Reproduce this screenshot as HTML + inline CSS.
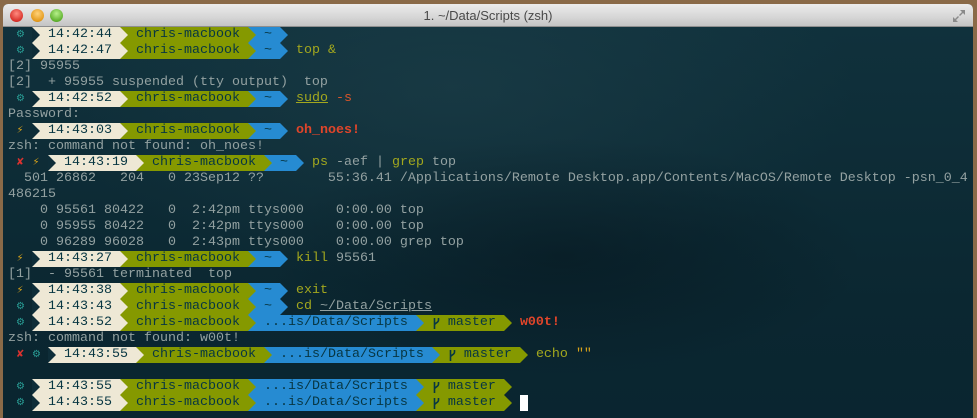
<!DOCTYPE html>
<html><head><meta charset="utf-8"><style>
*{margin:0;padding:0;box-sizing:border-box}
body{width:977px;height:418px;overflow:hidden;background:#8a6a48;position:relative;font-family:"Liberation Mono","DejaVu Sans Mono",monospace}
#win{position:absolute;left:3px;top:4px;width:970px;height:414px;border-radius:5px 5px 0 0;overflow:hidden;background:#0d2b36}
#tb{position:absolute;left:0;top:0;width:100%;height:23px;background:linear-gradient(#ececec,#d6d6d6 60%,#c4c4c4);border-bottom:1px solid #8e8e8e}
#tb .t{position:absolute;left:0;width:100%;top:4px;text-align:center;font:13px "Liberation Sans",sans-serif;color:#4a4a4a}
.dot{position:absolute;top:5px;width:13px;height:13px;border-radius:50%}
#term{position:absolute;left:0;top:23px;width:100%;height:391px;
background:radial-gradient(ellipse 300px 120px at 560px 230px,rgba(5,20,28,.5),transparent),radial-gradient(ellipse 400px 200px at 450px 60px,rgba(40,75,85,.35),transparent),linear-gradient(#10313c,#0b2731 70%,#0a2530)}
.row{position:absolute;left:5px;height:16px;line-height:16px;font-size:13.333px;white-space:pre;color:#93a1a1}
.row>span{display:inline-block;height:16px;vertical-align:top}
.i{width:8px;text-align:center;font-family:"DejaVu Sans",sans-serif;font-size:10px}
.s{width:8px;position:relative;background:var(--b)}
.s::before{content:"";position:absolute;left:0;top:0;border-top:8px solid transparent;border-bottom:8px solid transparent;border-left:8px solid var(--a)}
.be{background:#eee8d5;color:#073642}
.gr{background:#859900;color:#073642}
.bl{background:#268bd2;color:#073642}
.y{color:#a2a71e}.r{color:#e0452a;font-weight:bold}.o{color:#d8552a}
.c{color:#2aa198}.z{color:#d7a21a}.x{color:#dc322f}
.br{display:inline-block;width:8px;height:16px;vertical-align:top}
</style></head><body>
<div id="win">
<div id="tb">
<div class="dot" style="left:7px;background:radial-gradient(circle at 50% 35%,#ff8b80,#d8312a 70%,#a0201a)"></div>
<div class="dot" style="left:28px;background:radial-gradient(circle at 50% 35%,#ffd27a,#e49a1c 70%,#b07010)"></div>
<div class="dot" style="left:47px;background:radial-gradient(circle at 50% 35%,#b6f08a,#5fb12e 70%,#3d8020)"></div>
<div class="t">1. ~/Data/Scripts (zsh)</div>
<svg style="position:absolute;right:6px;top:4px" width="16" height="16" viewBox="0 0 16 16"><path d="M9 2h5v5l-2-2-3 3-1-1 3-3zM7 14H2V9l2 2 3-3 1 1-3 3z" fill="#8a8a8a"/></svg>
</div>
<div id="term">
<div class="row" style="top:0px"> <span class="i c">⚙</span> <span class="s" style="--a:#0e2d38;--b:#eee8d5"></span><span class="be"> 14:42:44 </span><span class="s" style="--a:#eee8d5;--b:#859900"></span><span class="gr"> chris-macbook </span><span class="s" style="--a:#859900;--b:#268bd2"></span><span class="bl"> ~ </span><span class="s" style="--a:#268bd2;--b:transparent"></span></div>
<div class="row" style="top:16px"> <span class="i c">⚙</span> <span class="s" style="--a:#0e2d38;--b:#eee8d5"></span><span class="be"> 14:42:47 </span><span class="s" style="--a:#eee8d5;--b:#859900"></span><span class="gr"> chris-macbook </span><span class="s" style="--a:#859900;--b:#268bd2"></span><span class="bl"> ~ </span><span class="s" style="--a:#268bd2;--b:transparent"></span> <span class="y">top &amp;</span></div>
<div class="row" style="top:32px">[2] 95955</div>
<div class="row" style="top:48px">[2]  + 95955 suspended (tty output)  top</div>
<div class="row" style="top:64px"> <span class="i c">⚙</span> <span class="s" style="--a:#0e2d38;--b:#eee8d5"></span><span class="be"> 14:42:52 </span><span class="s" style="--a:#eee8d5;--b:#859900"></span><span class="gr"> chris-macbook </span><span class="s" style="--a:#859900;--b:#268bd2"></span><span class="bl"> ~ </span><span class="s" style="--a:#268bd2;--b:transparent"></span> <span class="y" style="text-decoration:underline">sudo</span> <span class="o">-s</span></div>
<div class="row" style="top:80px">Password:</div>
<div class="row" style="top:96px"> <span class="i z">⚡</span> <span class="s" style="--a:#0e2d38;--b:#eee8d5"></span><span class="be"> 14:43:03 </span><span class="s" style="--a:#eee8d5;--b:#859900"></span><span class="gr"> chris-macbook </span><span class="s" style="--a:#859900;--b:#268bd2"></span><span class="bl"> ~ </span><span class="s" style="--a:#268bd2;--b:transparent"></span> <span class="r">oh_noes!</span></div>
<div class="row" style="top:112px">zsh: command not found: oh_noes!</div>
<div class="row" style="top:128px"> <span class="i x">✘</span> <span class="i z">⚡</span> <span class="s" style="--a:#0e2d38;--b:#eee8d5"></span><span class="be"> 14:43:19 </span><span class="s" style="--a:#eee8d5;--b:#859900"></span><span class="gr"> chris-macbook </span><span class="s" style="--a:#859900;--b:#268bd2"></span><span class="bl"> ~ </span><span class="s" style="--a:#268bd2;--b:transparent"></span> <span class="y">ps</span> -aef | <span class="y">grep</span> top</div>
<div class="row" style="top:144px">  501 26862   204   0 23Sep12 ??        55:36.41 /Applications/Remote Desktop.app/Contents/MacOS/Remote Desktop -psn_0_4</div>
<div class="row" style="top:160px">486215</div>
<div class="row" style="top:176px">    0 95561 80422   0  2:42pm ttys000    0:00.00 top</div>
<div class="row" style="top:192px">    0 95955 80422   0  2:42pm ttys000    0:00.00 top</div>
<div class="row" style="top:208px">    0 96289 96028   0  2:43pm ttys000    0:00.00 grep top</div>
<div class="row" style="top:224px"> <span class="i z">⚡</span> <span class="s" style="--a:#0e2d38;--b:#eee8d5"></span><span class="be"> 14:43:27 </span><span class="s" style="--a:#eee8d5;--b:#859900"></span><span class="gr"> chris-macbook </span><span class="s" style="--a:#859900;--b:#268bd2"></span><span class="bl"> ~ </span><span class="s" style="--a:#268bd2;--b:transparent"></span> <span class="y">kill</span> 95561</div>
<div class="row" style="top:240px">[1]  - 95561 terminated  top</div>
<div class="row" style="top:256px"> <span class="i z">⚡</span> <span class="s" style="--a:#0e2d38;--b:#eee8d5"></span><span class="be"> 14:43:38 </span><span class="s" style="--a:#eee8d5;--b:#859900"></span><span class="gr"> chris-macbook </span><span class="s" style="--a:#859900;--b:#268bd2"></span><span class="bl"> ~ </span><span class="s" style="--a:#268bd2;--b:transparent"></span> <span class="y">exit</span></div>
<div class="row" style="top:272px"> <span class="i c">⚙</span> <span class="s" style="--a:#0e2d38;--b:#eee8d5"></span><span class="be"> 14:43:43 </span><span class="s" style="--a:#eee8d5;--b:#859900"></span><span class="gr"> chris-macbook </span><span class="s" style="--a:#859900;--b:#268bd2"></span><span class="bl"> ~ </span><span class="s" style="--a:#268bd2;--b:transparent"></span> <span class="y">cd</span> <span style="text-decoration:underline">~/Data/Scripts</span></div>
<div class="row" style="top:288px"> <span class="i c">⚙</span> <span class="s" style="--a:#0e2d38;--b:#eee8d5"></span><span class="be"> 14:43:52 </span><span class="s" style="--a:#eee8d5;--b:#859900"></span><span class="gr"> chris-macbook </span><span class="s" style="--a:#859900;--b:#268bd2"></span><span class="bl"> ...is/Data/Scripts </span><span class="s" style="--a:#268bd2;--b:#859900"></span><span class="gr"> <svg class="br" viewBox="0 0 8 16"><path d="M2.5 3v11M2.5 10c0-2 4-2 4-5V3" stroke="#073642" stroke-width="1.6" fill="none"/></svg> master </span><span class="s" style="--a:#859900;--b:transparent"></span> <span class="r">w00t!</span></div>
<div class="row" style="top:304px">zsh: command not found: w00t!</div>
<div class="row" style="top:320px"> <span class="i x">✘</span> <span class="i c">⚙</span> <span class="s" style="--a:#0e2d38;--b:#eee8d5"></span><span class="be"> 14:43:55 </span><span class="s" style="--a:#eee8d5;--b:#859900"></span><span class="gr"> chris-macbook </span><span class="s" style="--a:#859900;--b:#268bd2"></span><span class="bl"> ...is/Data/Scripts </span><span class="s" style="--a:#268bd2;--b:#859900"></span><span class="gr"> <svg class="br" viewBox="0 0 8 16"><path d="M2.5 3v11M2.5 10c0-2 4-2 4-5V3" stroke="#073642" stroke-width="1.6" fill="none"/></svg> master </span><span class="s" style="--a:#859900;--b:transparent"></span> <span class="y">echo</span> <span class="z">""</span></div>
<div class="row" style="top:352px"> <span class="i c">⚙</span> <span class="s" style="--a:#0e2d38;--b:#eee8d5"></span><span class="be"> 14:43:55 </span><span class="s" style="--a:#eee8d5;--b:#859900"></span><span class="gr"> chris-macbook </span><span class="s" style="--a:#859900;--b:#268bd2"></span><span class="bl"> ...is/Data/Scripts </span><span class="s" style="--a:#268bd2;--b:#859900"></span><span class="gr"> <svg class="br" viewBox="0 0 8 16"><path d="M2.5 3v11M2.5 10c0-2 4-2 4-5V3" stroke="#073642" stroke-width="1.6" fill="none"/></svg> master </span><span class="s" style="--a:#859900;--b:transparent"></span></div>
<div class="row" style="top:368px"> <span class="i c">⚙</span> <span class="s" style="--a:#0e2d38;--b:#eee8d5"></span><span class="be"> 14:43:55 </span><span class="s" style="--a:#eee8d5;--b:#859900"></span><span class="gr"> chris-macbook </span><span class="s" style="--a:#859900;--b:#268bd2"></span><span class="bl"> ...is/Data/Scripts </span><span class="s" style="--a:#268bd2;--b:#859900"></span><span class="gr"> <svg class="br" viewBox="0 0 8 16"><path d="M2.5 3v11M2.5 10c0-2 4-2 4-5V3" stroke="#073642" stroke-width="1.6" fill="none"/></svg> master </span><span class="s" style="--a:#859900;--b:transparent"></span> <span style="width:8px;background:#fff"></span></div>
</div>
</div>
</body></html>
